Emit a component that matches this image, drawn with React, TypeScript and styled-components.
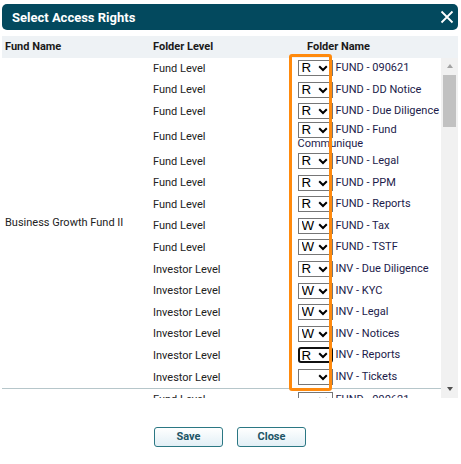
import React from "react";
import styled, { createGlobalStyle } from "styled-components";

const GlobalStyle = createGlobalStyle`
  html, body { margin: 0; padding: 0; background: #ffffff; }
  body { font-family: Roboto, "Liberation Sans", Arial, sans-serif; }
`;

const Dialog = styled.div`
  position: relative;
  width: 456px;
  padding: 4px 3px 0 2px;
  display: flex;
  flex-direction: column;
`;

const TitleBar = styled.div`
  height: 26px;
  border-radius: 5px;
  background: #03495e;
  display: flex;
  align-items: center;
  justify-content: space-between;
  padding: 0 4px 0 10px;
  color: #ffffff;
  font: 700 13px Roboto, sans-serif;
`;

const CloseIcon = styled.svg`
  width: 14px;
  height: 14px;
  display: block;
`;

const HeaderRow = styled.div`
  margin-top: 6px;
  height: 21.5px;
  display: grid;
  grid-template-columns: 148px 145px 1fr;
  align-items: center;
  background: #eef2f5;
  font: 700 11px Roboto, sans-serif;
  color: #1a1a1a;
`;

const HeaderCell = styled.div<{ $pl: number }>`
  padding-left: ${(p) => p.$pl}px;
`;

const Body = styled.div`
  height: 340px;
  display: flex;
`;

const Viewport = styled.div`
  flex: 1;
  overflow: hidden;
`;

const Group = styled.div`
  display: flex;
  border-bottom: 1px solid #b6c6ca;
`;

const FundCell = styled.div`
  width: 148px;
  flex: none;
  box-sizing: border-box;
  padding-left: 3px;
  display: flex;
  align-items: center;
  font: 400 11px Roboto, sans-serif;
  color: #222222;
`;

const Rows = styled.div`
  flex: 1;
  display: flex;
  flex-direction: column;
`;

const Row = styled.div`
  display: grid;
  grid-template-columns: 145px 1fr;
  align-items: center;
  min-height: 21.6px;
`;

const LevelCell = styled.div`
  padding-left: 3px;
  font: 400 11px Roboto, sans-serif;
  color: #222222;
`;

const FolderCell = styled.div`
  padding: 0 0 0 2.5px;
  font: 400 11px Roboto, sans-serif;
  line-height: 12px;
  color: #1c1b4a;
`;

const SelectWrap = styled.span`
  position: relative;
  display: inline-block;
  vertical-align: middle;
  width: 35px;
  height: 16px;
  margin-right: 3px;
`;

const Select = styled.select<{ $focused?: boolean }>`
  appearance: none;
  -webkit-appearance: none;
  box-sizing: border-box;
  width: 100%;
  height: 100%;
  margin: 0;
  padding: 0 0 0 ${(p) => (p.$focused ? 2 : 3)}px;
  background: #ffffff;
  color: #000000;
  font: 400 13.33px "Liberation Sans", Arial, sans-serif;
  line-height: 14px;
  border: ${(p) => (p.$focused ? "2px solid #101010" : "1px solid #767676")};
  border-radius: ${(p) => (p.$focused ? 3 : 0)}px;
  outline: none;
`;

const Chevron = styled.svg`
  position: absolute;
  right: 5px;
  top: 5px;
  width: 10px;
  height: 7px;
  pointer-events: none;
`;

const ScrollTrack = styled.div`
  width: 17px;
  flex: none;
  background: #f1f1f1;
  display: flex;
  flex-direction: column;
  align-items: center;
`;

const ArrowBox = styled.div`
  height: 17px;
  width: 17px;
  display: flex;
  align-items: center;
  justify-content: center;
`;

const Triangle = styled.div<{ $dir: "up" | "down"; $color: string }>`
  width: 0;
  height: 0;
  border-left: 3.5px solid transparent;
  border-right: 3.5px solid transparent;
  ${(p) =>
    p.$dir === "up"
      ? `border-bottom: 4px solid ${p.$color};`
      : `border-top: 4px solid ${p.$color};`}
`;

const Thumb = styled.div`
  width: 13px;
  height: 52px;
  background: #c1c1c1;
`;

const TrackSpacer = styled.div`
  flex: 1;
`;

const Highlight = styled.div`
  position: absolute;
  left: 289px;
  top: 54px;
  width: 43px;
  height: 337px;
  box-sizing: border-box;
  border: 3px solid #ff8a0d;
  border-radius: 3px;
  pointer-events: none;
`;

const Footer = styled.div`
  margin-top: 29px;
  display: flex;
  justify-content: center;
  gap: 14px;
`;

const Button = styled.button`
  width: 69px;
  height: 20px;
  box-sizing: border-box;
  border: 1px solid #2b7783;
  border-radius: 3px;
  background: linear-gradient(#ffffff, #e2eff6);
  color: #1d5566;
  font: 700 11px Roboto, sans-serif;
  padding: 0;
  cursor: pointer;
`;

type Item = { level: string; access: string; name: string; focused?: boolean };

const groups: { fund: string; items: Item[] }[] = [
  {
    fund: "Business Growth Fund II",
    items: [
      { level: "Fund Level", access: "R", name: "FUND - 090621" },
      { level: "Fund Level", access: "R", name: "FUND - DD Notice" },
      { level: "Fund Level", access: "R", name: "FUND - Due Diligence" },
      { level: "Fund Level", access: "R", name: "FUND - Fund Communique" },
      { level: "Fund Level", access: "R", name: "FUND - Legal" },
      { level: "Fund Level", access: "R", name: "FUND - PPM" },
      { level: "Fund Level", access: "R", name: "FUND - Reports" },
      { level: "Fund Level", access: "W", name: "FUND - Tax" },
      { level: "Fund Level", access: "W", name: "FUND - TSTF" },
      { level: "Investor Level", access: "R", name: "INV - Due Diligence" },
      { level: "Investor Level", access: "W", name: "INV - KYC" },
      { level: "Investor Level", access: "W", name: "INV - Legal" },
      { level: "Investor Level", access: "W", name: "INV - Notices" },
      { level: "Investor Level", access: "R", name: "INV - Reports", focused: true },
      { level: "Investor Level", access: "", name: "INV - Tickets" },
    ],
  },
  {
    fund: "Business Growth Fund III",
    items: [
      { level: "Fund Level", access: "", name: "FUND - 090621" },
      { level: "Fund Level", access: "", name: "FUND - DD Notice" },
      { level: "Fund Level", access: "", name: "FUND - Legal" },
    ],
  },
];

function AccessSelect({ value, focused }: { value: string; focused?: boolean }) {
  return (
    <SelectWrap>
      <Select $focused={focused} defaultValue={value}>
        <option value=""></option>
        <option value="R">R</option>
        <option value="W">W</option>
      </Select>
      <Chevron viewBox="0 0 10 7">
        <path d="M1.2 1.3 L5 5 L8.8 1.3" fill="none" stroke="#000" strokeWidth="2" />
      </Chevron>
    </SelectWrap>
  );
}

export default function App() {
  return (
    <>
      <GlobalStyle />
      <Dialog>
        <TitleBar>
          <span>Select Access Rights</span>
          <CloseIcon viewBox="0 0 14 14">
            <path d="M1.5 1.5 L12.5 12.5 M12.5 1.5 L1.5 12.5" stroke="#fff" strokeWidth="1.8" fill="none" />
          </CloseIcon>
        </TitleBar>
        <HeaderRow>
          <HeaderCell $pl={3}>Fund Name</HeaderCell>
          <HeaderCell $pl={3}>Folder Level</HeaderCell>
          <HeaderCell $pl={12}>Folder Name</HeaderCell>
        </HeaderRow>
        <Body>
          <Viewport>
            {groups.map((g) => (
              <Group key={g.fund}>
                <FundCell>{g.fund}</FundCell>
                <Rows>
                  {g.items.map((it, i) => (
                    <Row key={i}>
                      <LevelCell>{it.level}</LevelCell>
                      <FolderCell>
                        <AccessSelect value={it.access} focused={it.focused} />
                        {it.name}
                      </FolderCell>
                    </Row>
                  ))}
                </Rows>
              </Group>
            ))}
          </Viewport>
          <ScrollTrack>
            <ArrowBox>
              <Triangle $dir="up" $color="#a3a3a3" />
            </ArrowBox>
            <Thumb />
            <TrackSpacer />
            <ArrowBox>
              <Triangle $dir="down" $color="#505050" />
            </ArrowBox>
          </ScrollTrack>
        </Body>
        <Footer>
          <Button>Save</Button>
          <Button>Close</Button>
        </Footer>
        <Highlight />
      </Dialog>
    </>
  );
}
